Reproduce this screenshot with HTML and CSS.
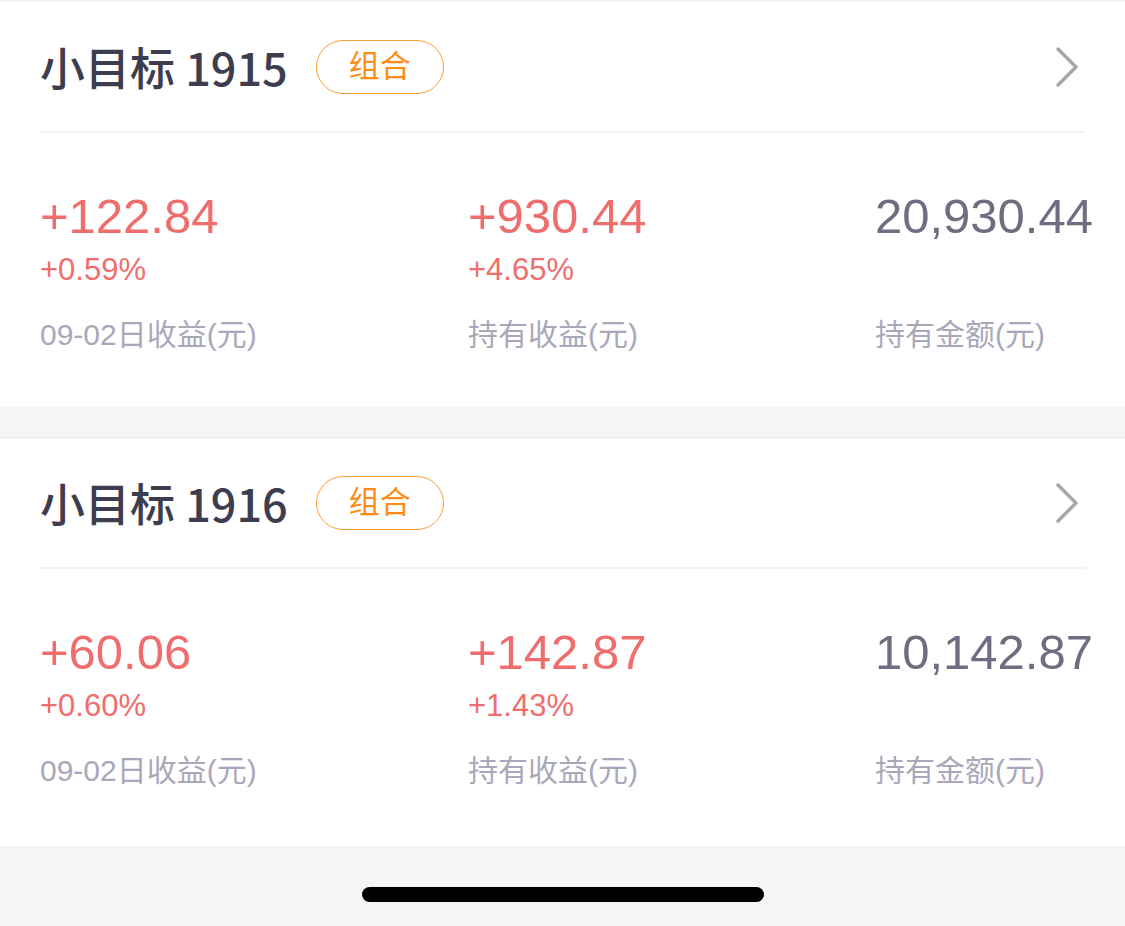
FILE: index.html
```html
<!DOCTYPE html>
<html lang="zh-CN">
<head>
    <meta charset="UTF-8">
    <meta name="viewport" content="width=device-width, initial-scale=1.0">
    <title>小目标组合</title>
    <link rel="stylesheet" href="styles.css">
</head>
<body>

<div class="page">
    <div class="card">
        <div class="card-head">
            <h2 class="card-title">小目标 1915</h2>
            <span class="tag">组合</span>
            <svg class="chevron" width="26" height="42" viewBox="0 0 26 42">
                <polyline points="4,3 22,21 4,39" fill="none" stroke="#a7a7a9" stroke-width="3.5" stroke-linecap="round" stroke-linejoin="round"/>
            </svg>
        </div>
        <div class="stats">
            <div class="stat">
                <div class="stat-value up">+122.84</div>
                <div class="stat-rate up">+0.59%</div>
                <div class="stat-label">09-02日收益(元)</div>
            </div>
            <div class="stat">
                <div class="stat-value up">+930.44</div>
                <div class="stat-rate up">+4.65%</div>
                <div class="stat-label">持有收益(元)</div>
            </div>
            <div class="stat">
                <div class="stat-value">20,930.44</div>
                <div class="stat-rate">&nbsp;</div>
                <div class="stat-label">持有金额(元)</div>
            </div>
        </div>
    </div>

    <div class="card card-last">
        <div class="card-head">
            <h2 class="card-title">小目标 1916</h2>
            <span class="tag">组合</span>
            <svg class="chevron" width="26" height="42" viewBox="0 0 26 42">
                <polyline points="4,3 22,21 4,39" fill="none" stroke="#a7a7a9" stroke-width="3.5" stroke-linecap="round" stroke-linejoin="round"/>
            </svg>
        </div>
        <div class="stats">
            <div class="stat">
                <div class="stat-value up">+60.06</div>
                <div class="stat-rate up">+0.60%</div>
                <div class="stat-label">09-02日收益(元)</div>
            </div>
            <div class="stat">
                <div class="stat-value up">+142.87</div>
                <div class="stat-rate up">+1.43%</div>
                <div class="stat-label">持有收益(元)</div>
            </div>
            <div class="stat">
                <div class="stat-value">10,142.87</div>
                <div class="stat-rate">&nbsp;</div>
                <div class="stat-label">持有金额(元)</div>
            </div>
        </div>
    </div>

    <div class="home-area">
        <div class="home-bar"></div>
    </div>
</div>

</body>
</html>
```

FILE: styles.css
```css
:root {
    --red: #ef6d6d;
    --gray-num: #6f6e80;
    --gray-label: #a9a8ba;
    --title: #3e3d4f;
    --orange: #ff8a14;
}

body {
    margin: 0;
    background-color: #f5f5f5;
    font-family: 'Liberation Sans', 'Noto Sans CJK SC', sans-serif;
}

.page {
    padding-top: 2px;
}

.card {
    background-color: #ffffff;
}

.card + .card {
    margin-top: 30px;
    border-top: 1px solid #e6e6e6;
}

.card-head {
    display: flex;
    align-items: center;
    height: 129px;
    margin: 0 39px;
    padding: 0 6px 0 1px;
    border-bottom: 2px solid #f2f2f4;
}

.card-title {
    margin: 0;
    font-family: 'Noto Sans CJK SC', sans-serif;
    font-size: 45px;
    font-weight: 500;
    line-height: 56px;
    color: var(--title);
}

.tag {
    margin-left: 28px;
    padding: 0 32px;
    height: 52px;
    line-height: 52px;
    font-size: 31px;
    color: var(--orange);
    border: 1px solid #ff9d35;
    border-radius: 28px;
}

.chevron {
    margin-left: auto;
}

.stats {
    display: grid;
    grid-template-columns: 428px 1fr auto;
    padding: 55px 32px 54px 40px;
}

.card-last .stats {
    padding-bottom: 57px;
}

.stat-value {
    font-size: 49px;
    line-height: 56px;
    color: var(--gray-num);
}

.stat-rate {
    margin-top: 9px;
    font-size: 31px;
    line-height: 34px;
}

.stat-label {
    margin-top: 30px;
    font-size: 30px;
    line-height: 36px;
    color: var(--gray-label);
}

.up {
    color: var(--red);
}

.home-area {
    height: 80px;
    display: flex;
    justify-content: center;
    padding-top: 41px;
    box-sizing: border-box;
}

.home-bar {
    width: 402px;
    height: 15px;
    border-radius: 8px;
    background-color: #000000;
}
```
